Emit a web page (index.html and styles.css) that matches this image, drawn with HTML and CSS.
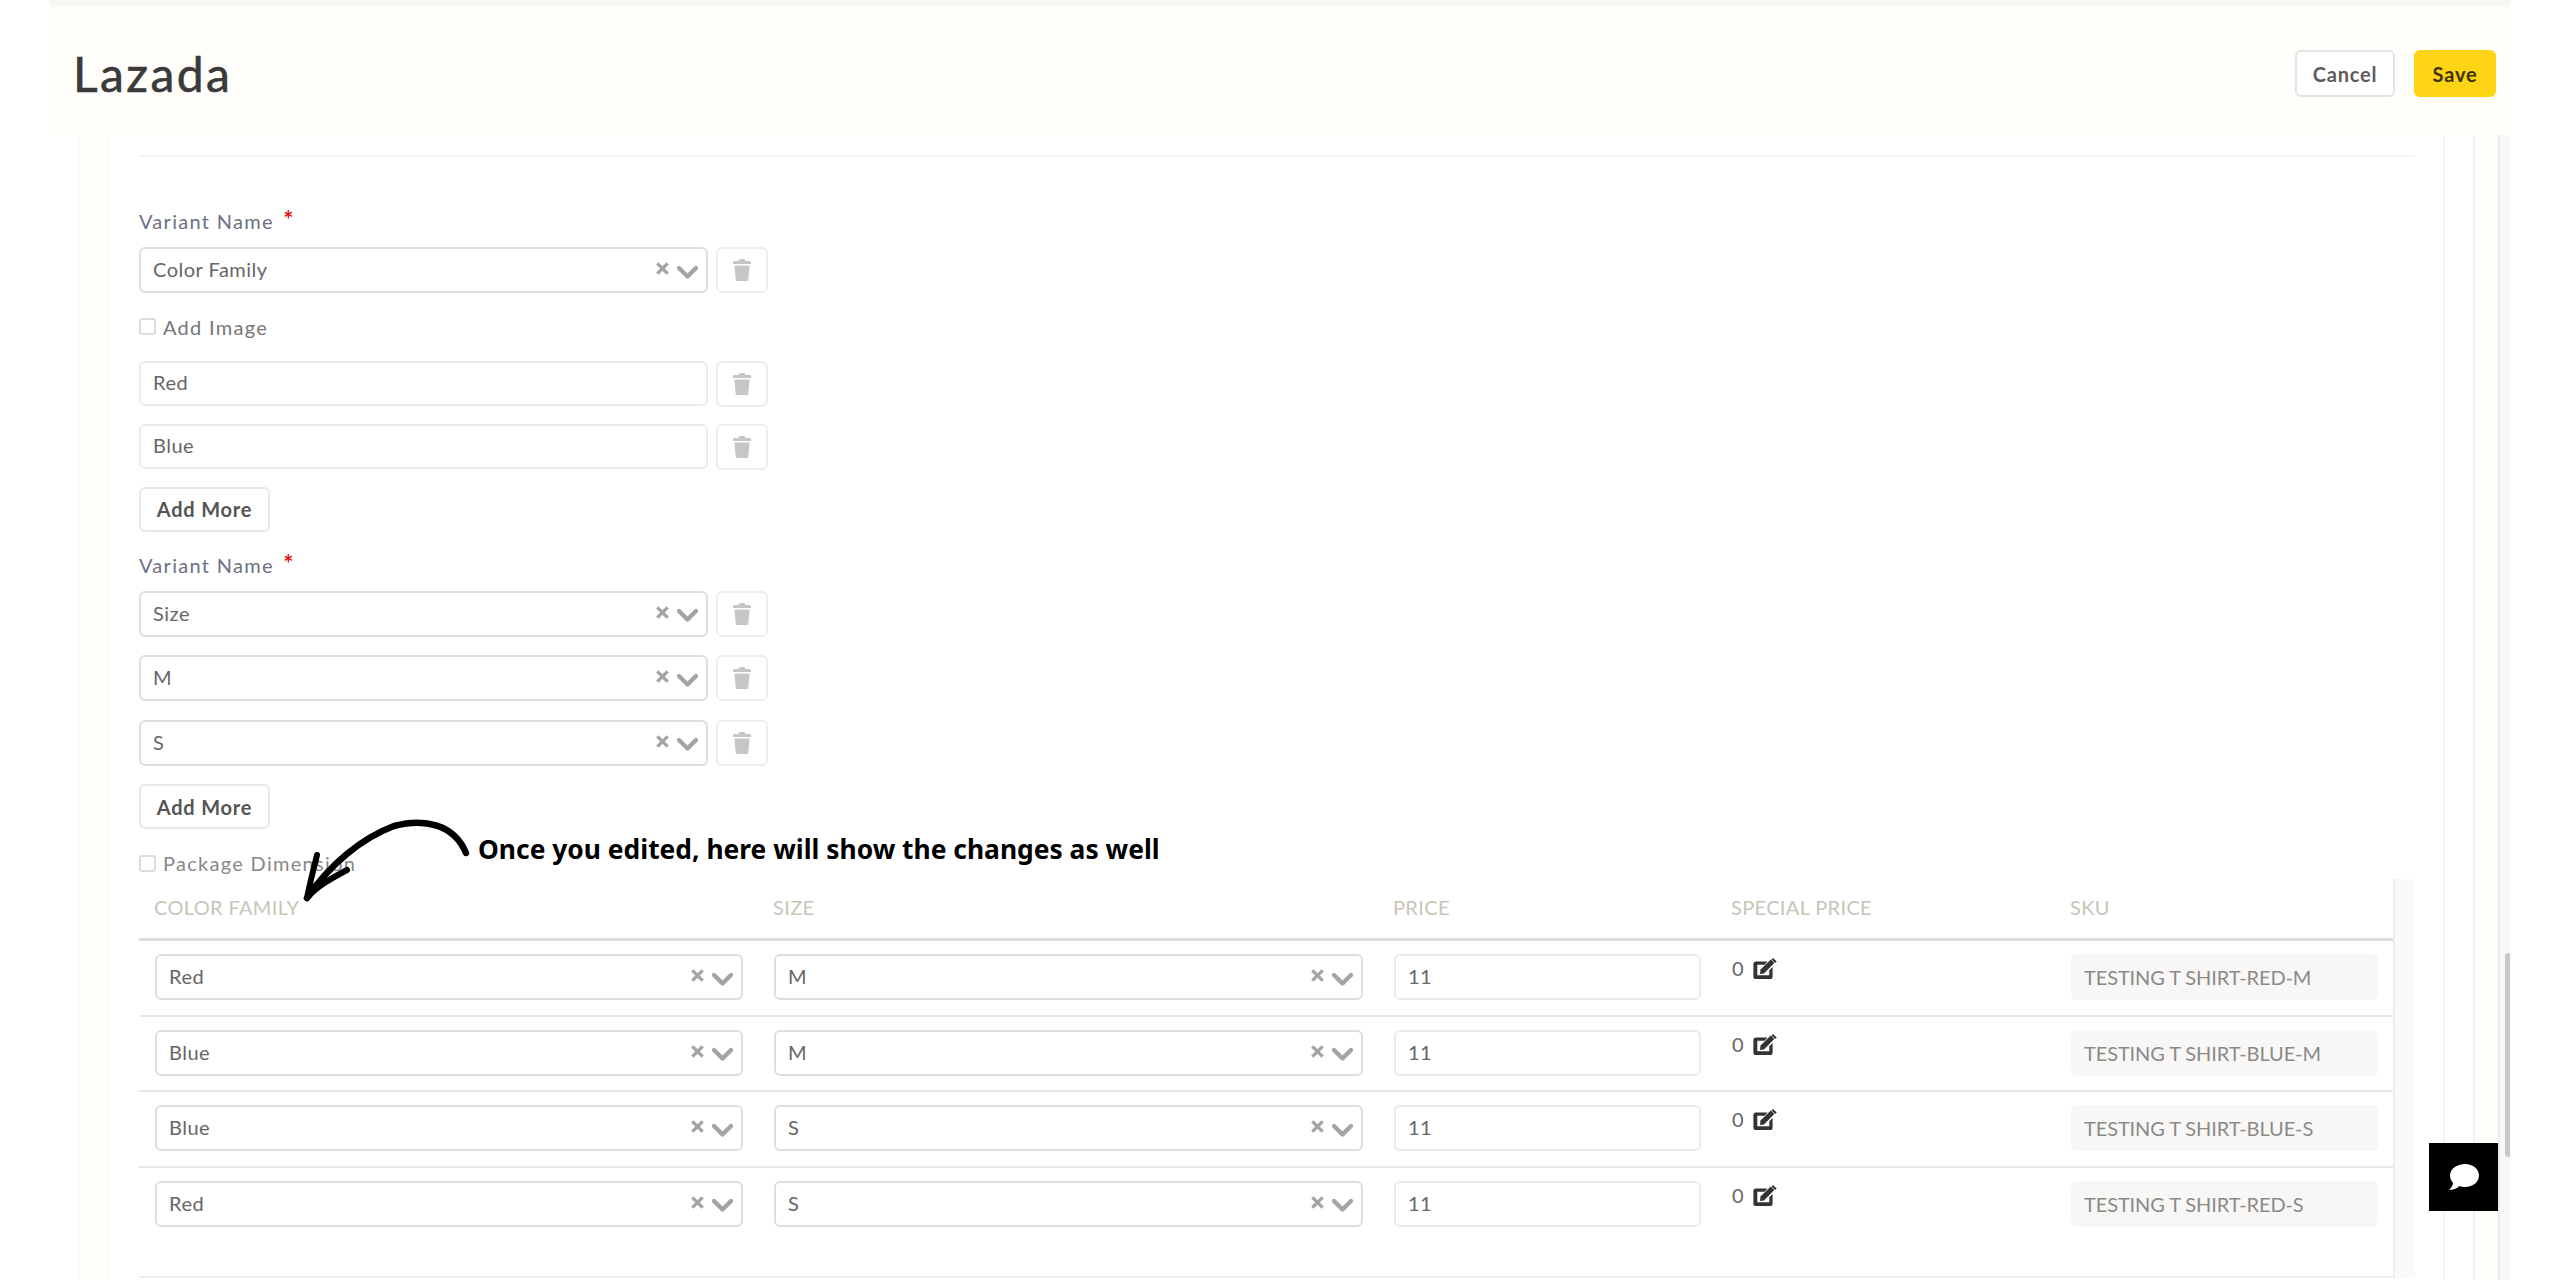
FILE: index.html
```html
<!DOCTYPE html>
<html lang="en">
<head>
<meta charset="utf-8">
<title>Lazada</title>
<link rel="stylesheet" href="styles.css">
</head>
<body>
<svg class="defs" width="0" height="0" aria-hidden="true">
  <symbol id="i-x" viewBox="0 0 12 12"><path d="M1.200 1.200l9.600 9.600M10.800 1.200l-9.600 9.600" fill="none" stroke="currentColor" stroke-width="3"/></symbol>
  <symbol id="i-chev" viewBox="0 0 21 14"><path d="M2 3l8.500 8.500L19 3" fill="none" stroke="currentColor" stroke-width="4.400" stroke-linecap="round" stroke-linejoin="round"/></symbol>
  <symbol id="i-trash" viewBox="0 0 18 22"><path d="M6.500 0h5l1 2H17a1 1 0 0 1 1 1v2H0V3a1 1 0 0 1 1-1h4.500zM1.500 6.500h15L15.300 21a1 1 0 0 1-1 1H3.700a1 1 0 0 1-1-1z" fill="currentColor"/></symbol>
  <symbol id="i-edit" viewBox="0 0 24 21"><path d="M3 3.500h11.500L11.500 6.800H4.300v10.400h12v-5l3.300-3.300v9.500A2.600 2.600 0 0 1 17 21H3a2.600 2.600 0 0 1-2.600-2.600V6.100A2.600 2.600 0 0 1 3 3.500z" fill="currentColor"/><path d="M7.500 11.500L17.800 1.500l3.500 3.500L11 15.500l-4 .6z" fill="currentColor"/><path d="M20 0l3.700 3.600-1.500 1.400-3.600-3.600z" fill="currentColor"/></symbol>
</svg>
<div class="shell">
  <header class="topbar">
    <h1 class="title">Lazada</h1>
    <div class="actions">
      <button class="btn-cancel">Cancel</button>
      <button class="btn-save">Save</button>
    </div>
  </header>
  <div class="workspace">
    <div class="rail-left"></div>
    <main class="panel">
      <div class="divider"></div>
      <div class="label first">Variant Name <span class="req">*</span></div>
      <div class="row">
        <div class="select wide"><span class="val">Color Family</span><svg class="x"><use href="#i-x"/></svg><svg class="chev"><use href="#i-chev"/></svg></div>
        <button class="trash"><svg><use href="#i-trash"/></svg></button>
      </div>
      <label class="check"><span class="box"></span>Add Image</label>
      <div class="row short">
        <div class="input wide">Red</div>
        <button class="trash"><svg><use href="#i-trash"/></svg></button>
      </div>
      <div class="row short">
        <div class="input wide">Blue</div>
        <button class="trash"><svg><use href="#i-trash"/></svg></button>
      </div>
      <button class="add">Add More</button>
      <div class="label">Variant Name <span class="req">*</span></div>
      <div class="row">
        <div class="select wide"><span class="val">Size</span><svg class="x"><use href="#i-x"/></svg><svg class="chev"><use href="#i-chev"/></svg></div>
        <button class="trash"><svg><use href="#i-trash"/></svg></button>
      </div>
      <div class="row">
        <div class="select wide"><span class="val">M</span><svg class="x"><use href="#i-x"/></svg><svg class="chev"><use href="#i-chev"/></svg></div>
        <button class="trash"><svg><use href="#i-trash"/></svg></button>
      </div>
      <div class="row">
        <div class="select wide"><span class="val">S</span><svg class="x"><use href="#i-x"/></svg><svg class="chev"><use href="#i-chev"/></svg></div>
        <button class="trash"><svg><use href="#i-trash"/></svg></button>
      </div>
      <button class="add">Add More</button>
      <label class="check pkg"><span class="box"></span>Package Dimension</label>

      <div class="table-wrap">
        <div class="table">
          <div class="tr head">
            <div>COLOR FAMILY</div><div>SIZE</div><div>PRICE</div><div>SPECIAL PRICE</div><div>SKU</div>
          </div>
          <div class="tr">
            <div class="td"><div class="select"><span class="val">Red</span><svg class="x"><use href="#i-x"/></svg><svg class="chev"><use href="#i-chev"/></svg></div></div>
            <div class="td"><div class="select"><span class="val">M</span><svg class="x"><use href="#i-x"/></svg><svg class="chev"><use href="#i-chev"/></svg></div></div>
            <div class="td"><div class="input">11</div></div>
            <div class="td special"><span>0</span><svg class="edit"><use href="#i-edit"/></svg></div>
            <div class="td"><div class="sku">TESTING T SHIRT-RED-M</div></div>
          </div>
          <div class="tr">
            <div class="td"><div class="select"><span class="val">Blue</span><svg class="x"><use href="#i-x"/></svg><svg class="chev"><use href="#i-chev"/></svg></div></div>
            <div class="td"><div class="select"><span class="val">M</span><svg class="x"><use href="#i-x"/></svg><svg class="chev"><use href="#i-chev"/></svg></div></div>
            <div class="td"><div class="input">11</div></div>
            <div class="td special"><span>0</span><svg class="edit"><use href="#i-edit"/></svg></div>
            <div class="td"><div class="sku">TESTING T SHIRT-BLUE-M</div></div>
          </div>
          <div class="tr">
            <div class="td"><div class="select"><span class="val">Blue</span><svg class="x"><use href="#i-x"/></svg><svg class="chev"><use href="#i-chev"/></svg></div></div>
            <div class="td"><div class="select"><span class="val">S</span><svg class="x"><use href="#i-x"/></svg><svg class="chev"><use href="#i-chev"/></svg></div></div>
            <div class="td"><div class="input">11</div></div>
            <div class="td special"><span>0</span><svg class="edit"><use href="#i-edit"/></svg></div>
            <div class="td"><div class="sku">TESTING T SHIRT-BLUE-S</div></div>
          </div>
          <div class="tr last">
            <div class="td"><div class="select"><span class="val">Red</span><svg class="x"><use href="#i-x"/></svg><svg class="chev"><use href="#i-chev"/></svg></div></div>
            <div class="td"><div class="select"><span class="val">S</span><svg class="x"><use href="#i-x"/></svg><svg class="chev"><use href="#i-chev"/></svg></div></div>
            <div class="td"><div class="input">11</div></div>
            <div class="td special"><span>0</span><svg class="edit"><use href="#i-edit"/></svg></div>
            <div class="td"><div class="sku">TESTING T SHIRT-RED-S</div></div>
          </div>
          <div class="table-foot"></div>
        </div>
        <div class="table-scroll"></div>
      </div>
    </main>
    <div class="rail-right"></div>
    <div class="scrollbar"><div class="thumb"></div></div>
  </div>
  <svg class="arrow" viewBox="0 0 190 100" width="190" height="100" aria-hidden="true">
    <path d="M176 43C164 14 134 8 104 16 72 28 40 54 17 88" fill="none" stroke="#000" stroke-width="6.500" stroke-linecap="round"/>
    <path d="M17 88C20 72 24 58 27 45M17 88C27 76 42 68 57 60" fill="none" stroke="#000" stroke-width="6" stroke-linecap="round"/>
  </svg>
  <div class="note">Once you edited, here will show the changes as well</div>
  <button class="chat" aria-label="Chat">
    <svg viewBox="0 0 32 28" width="32" height="28"><path d="M17 1C25 1 31 6 31 12.500S25 24 17 24c-2 0-4-.3-5.600-1C9 25.500 5 27 1 27c2.500-2 3.800-4.500 4-7.200C3.200 17.800 2 15.300 2 12.500 2 6 9 1 17 1z" fill="#fff"/></svg>
  </button>
</div>
</body>
</html>
```
FILE: styles.css
```css
* { box-sizing: border-box; }
html, body { margin: 0; height: 100%; background: #fff; overflow: hidden; }
body { font-family: "Lato", "Liberation Sans", sans-serif; color: #666; }
.defs { position: absolute; }
button { font-family: inherit; padding: 0; margin: 0; cursor: pointer; }

.shell { position: relative; margin-left: 49px; width: 2461px; height: 1280px; overflow: hidden; display: flex; flex-direction: column; }

.topbar { flex: none; height: 135px; background: #fffefb; border-top: 7px solid #f8f7f4; display: flex; align-items: center; justify-content: space-between; padding: 5px 14px 0 24px; }
.title { margin: 0; font-size: 48px; font-weight: 400; color: #3a3a3a; letter-spacing: 2.400px; -webkit-text-stroke: .6px #3a3a3a; }
.actions { display: flex; gap: 19px; }
.btn-cancel, .btn-save { height: 47px; border-radius: 6px; font-size: 20px; letter-spacing: .8px; font-weight: 700; }
.btn-cancel { width: 100px; background: #fff; border: 2px solid #e4e4e4; color: #5c5c5c; }
.btn-save { width: 82px; background: #ffd414; border: 0; color: #3d3309; }

.workspace { flex: 1; display: flex; min-height: 0; }
.rail-left { flex: none; width: 60px; background: linear-gradient(to right, #fff 0 30px, #f9f8f6 30px 31px, #fffefb 31px 59px, #f6f5f2 59px); }
.panel { flex: none; width: 2336px; padding: 20px 28px 0 30px; background: #fff; border-right: 2px solid #f5f4f1; }
.rail-right { flex: none; width: 53px; background: linear-gradient(to right, #fff 0 28px, #f2f1ee 28px 30px, #fffdf9 30px); }
.scrollbar { flex: none; width: 12px; background: #f8f8f8; border-left: 2px solid #ececec; padding-top: 818px; }
.thumb { margin-left: 5px; width: 7px; height: 204px; background: #c8c8c8; border-radius: 4px; }

.divider { height: 2px; background: #f5f5f2; }
.label { height: 30px; line-height: 30px; margin: 18px 0 11px; font-size: 20px; letter-spacing: 1.300px; color: #6d7184; }
.label.first { margin-top: 49px; }
.req { color: #e0141e; font-weight: 700; font-size: 24px; line-height: 20px; margin-left: 3px; }

.row { display: flex; gap: 8px; height: 46px; margin-bottom: 18.500px; }
.row.short { height: 45px; margin-bottom: 18px; }
.select, .input { display: flex; align-items: center; height: 46px; padding: 0 9px 2px 12px; background: #fff; border: 2px solid #dedede; border-radius: 6px; font-size: 20px; letter-spacing: .5px; color: #666; }
.input { border-color: #ebebeb; }
.row.short .input { height: 45px; }
.wide { flex: none; width: 569px; }
.val { flex: 1; }
.x { width: 13px; height: 13px; color: #a4a4a4; margin-top: -1px; }
.chev { width: 21px; height: 14px; color: #a4a4a4; margin-left: 8px; margin-top: 5px; margin-right: -1px; }
.trash { flex: none; width: 52px; height: 46px; background: #fff; border: 2px solid #ededed; border-radius: 6px; display: flex; align-items: center; justify-content: center; }
.trash svg { width: 18px; height: 22px; color: #c6c6c6; }

.check { display: flex; align-items: center; gap: 7px; height: 34px; margin: -2px 0 17px; font-size: 20px; letter-spacing: 1.300px; color: #777; }
.check .box { width: 17px; height: 17px; border: 2px solid #dcdcdc; border-radius: 3px; background: #fff; }
.check.pkg { margin: 17px 0 -1px; color: #888; }

.add { display: block; width: 131px; height: 45px; margin-top: 1px; background: #fff; border: 2px solid #e8e8e8; border-radius: 6px; font-size: 20px; font-weight: 700; letter-spacing: .8px; color: #555; }

.table-wrap { display: flex; }
.table { flex: none; width: 2254px; }
.tr { display: grid; grid-template-columns: 619px 620px 338px 339px 338px; height: 75.500px; border-bottom: 2px solid #e8e8e8; }
.tr.last { border-bottom: 0; }
.tr.head { height: 62px; border-bottom: 3px solid #dcdcdc; font-size: 20px; letter-spacing: .35px; color: #c6c6b8; }
.tr.head > div { padding: 16px 15px 0; line-height: 24px; }
.td { padding: 13px 15px 0 16px; }
.td.special { display: flex; align-items: flex-start; gap: 9px; padding: 12px 0 0 16px; font-size: 20px; color: #666; }
.td.special span { line-height: 30px; }
.edit { width: 24px; height: 21px; margin-top: 5px; color: #333; }
.sku { height: 46px; line-height: 46px; padding-left: 13px; background: #f8f7f5; border-radius: 6px; font-size: 20px; color: #8a8a8a; letter-spacing: -.1px; white-space: nowrap; overflow: hidden; }
.table-scroll { flex: none; width: 22px; background: #fafafa; border-left: 2px solid #eee; }
.table-foot { height: 35px; border-bottom: 2px solid #eee; }

.arrow { position: absolute; left: 241px; top: 810px; pointer-events: none; }
.note { position: absolute; left: 429px; top: 831px; line-height: 36px; font-family: "Noto Sans", "Open Sans", sans-serif; font-weight: 700; font-size: 26.400px; color: #000; white-space: nowrap; }
.chat { position: absolute; left: 2380px; top: 1143px; width: 69px; height: 68px; border: 0; background: #000; display: flex; align-items: center; justify-content: center; }
```
